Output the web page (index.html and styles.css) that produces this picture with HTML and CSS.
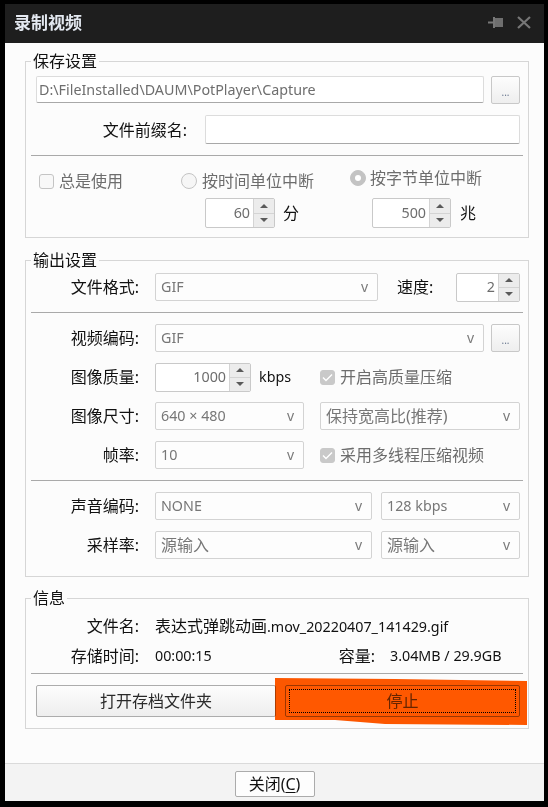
FILE: index.html
```html
<!DOCTYPE html>
<html lang="zh-CN">
<head>
<meta charset="utf-8">
<title>录制视频</title>
<link rel="stylesheet" href="styles.css">
</head>
<body>
<div class="window">
  <div class="titlebar">
    <span class="title">录制视频</span>
    <span class="tb-icons">
      <svg class="pin" width="15" height="11" viewBox="0 0 15 11"><path d="M0 5.5h6" stroke="#777" stroke-width="2"/><rect x="5" y="0" width="2" height="11" fill="#777"/><rect x="7" y="1" width="8" height="9" fill="#6e6e6e"/></svg>
      <svg class="xbtn" width="14" height="13" viewBox="0 0 14 13"><path d="M1 1l12 11M13 1L1 12" stroke="#777" stroke-width="2.2"/></svg>
    </span>
  </div>

  <div class="content">
    <fieldset class="group g-save">
      <legend>保存设置</legend>
      <div class="row r-path">
        <div class="input path lat">D:\FileInstalled\DAUM\PotPlayer\Capture</div>
        <div class="btn dots">...</div>
      </div>
      <div class="row r-prefix">
        <span class="lbl lbl-wide">文件前缀名:</span>
        <div class="input grow"></div>
      </div>
      <div class="sep s1"></div>
      <div class="opts r-radio">
        <span class="check c-always"><span class="box"></span>总是使用</span>
        <span class="check"><span class="radio"></span>按时间单位中断</span>
        <span class="check r2"><span class="radio on"></span>按字节单位中断</span>
      </div>
      <div class="opts r-spins">
        <span></span>
        <span class="spin-wrap sw1">
          <span class="spin w70"><span class="val lat">60</span><span class="arrows"><i class="up"></i><i class="dn"></i></span></span>
          <span class="unit">分</span>
        </span>
        <span class="spin-wrap sw2">
          <span class="spin w79"><span class="val lat">500</span><span class="arrows"><i class="up"></i><i class="dn"></i></span></span>
          <span class="unit u2">兆</span>
        </span>
      </div>
    </fieldset>

    <fieldset class="group g-out">
      <legend>输出设置</legend>
      <div class="stack">
        <div class="row h28">
          <span class="lbl">文件格式:</span>
          <span class="combo w223"><span class="lat">GIF</span><span class="v">v</span></span>
          <span class="speed">速度:</span>
          <span class="spin w64 push"><span class="val lat">2</span><span class="arrows"><i class="up"></i><i class="dn"></i></span></span>
        </div>
        <div class="sep"></div>
        <div class="row h28">
          <span class="lbl">视频编码:</span>
          <span class="combo grow"><span class="lat">GIF</span><span class="v">v</span></span>
          <div class="btn dots">...</div>
        </div>
        <div class="row h28">
          <span class="lbl">图像质量:</span>
          <span class="cell c149">
            <span class="spin w96"><span class="val lat">1000</span><span class="arrows"><i class="up"></i><i class="dn"></i></span></span>
            <span class="unit kbps lat">kbps</span>
          </span>
          <span class="check cell2"><span class="box on"><svg width="11" height="9" viewBox="0 0 11 9"><path d="M1 4.5l3 3 6-6" fill="none" stroke="#fff" stroke-width="1.4"/></svg></span>开启高质量压缩</span>
        </div>
        <div class="row h28">
          <span class="lbl">图像尺寸:</span>
          <span class="combo c149"><span class="lat">640 × 480</span><span class="v">v</span></span>
          <span class="combo cell2 grow"><span>保持宽高比(推荐)</span><span class="v">v</span></span>
        </div>
        <div class="row h28">
          <span class="lbl">帧率:</span>
          <span class="combo c149"><span class="lat">10</span><span class="v">v</span></span>
          <span class="check cell2"><span class="box on"><svg width="11" height="9" viewBox="0 0 11 9"><path d="M1 4.5l3 3 6-6" fill="none" stroke="#fff" stroke-width="1.4"/></svg></span>采用多线程压缩视频</span>
        </div>
        <div class="sep"></div>
        <div class="row h28">
          <span class="lbl">声音编码:</span>
          <span class="combo c217"><span class="lat">NONE</span><span class="v">v</span></span>
          <span class="combo cell3 grow"><span class="lat">128 kbps</span><span class="v">v</span></span>
        </div>
        <div class="row h28">
          <span class="lbl">采样率:</span>
          <span class="combo c217"><span>源输入</span><span class="v">v</span></span>
          <span class="combo cell3 grow"><span>源输入</span><span class="v">v</span></span>
        </div>
      </div>
    </fieldset>

    <fieldset class="group g-info">
      <legend>信息</legend>
      <div class="row h24">
        <span class="lbl">文件名:</span>
        <span class="value">表达式弹跳动画<span class="lat">.mov_20220407_141429.gif</span></span>
      </div>
      <div class="row h24 r-info2">
        <span class="lbl">存储时间:</span>
        <span class="value v178 lat">00:00:15</span>
        <span class="lbl2">容量:</span>
        <span class="value v2 lat">3.04MB / 29.9GB</span>
      </div>
      <div class="sep s3"></div>
      <div class="r-btns">
        <div class="btn big">打开存档文件夹</div>
        <div class="btn big stop"><span class="focus">停止</span></div>
        <svg class="marker" width="252" height="47" viewBox="0 0 252 47" preserveAspectRatio="none"><polygon points="0,0 120,1 252,3 252,47 110,46 60,42 0,42" fill="#ff5800"/></svg>
      </div>
    </fieldset>
  </div>

  <div class="footer">
    <div class="btn close-btn">关闭(<u>C</u>)</div>
  </div>
</div>
</body>
</html>
```

FILE: styles.css
```css
* { box-sizing: border-box; }
html, body { margin: 0; padding: 0; }
body {
  background: #000;
  width: 548px;
  height: 807px;
  overflow: hidden;
  font-family: "Noto Sans", "Noto Sans CJK SC", sans-serif;
  font-size: 16px;
  line-height: 20px;
  color: #111;
}
.lat { font-size: 14.3px; }
.window {
  margin: 4px 4px 0 5px;
  height: 797px;
  display: flex;
  flex-direction: column;
  background: #fcfcfc;
}
.titlebar {
  height: 39px;
  flex: none;
  background: #1e1e1e;
  display: flex;
  align-items: center;
  padding: 0 13px 0 9px;
}
.title {
  font-family: "Noto Sans CJK SC", sans-serif;
  font-weight: 700;
  font-size: 17px;
  color: #e3e8f0;
  margin-top: -4px;
}
.tb-icons {
  margin-left: auto;
  display: flex;
  align-items: center;
  gap: 14px;
  margin-top: -3px;
}
.tb-icons svg { display: block; }

.content {
  flex: 1;
  padding: 8px 15px 0 20px;
}
.group {
  margin: 0;
  min-width: 0;
  border: 1px solid #d6d6d6;
  padding: 5px 8px 9px 10px;
}
.group legend {
  padding: 0 2px;
  margin-left: -5px;
  line-height: 20px;
  color: #111;
}
.g-out { margin-top: 12px; padding-top: 3px; padding-bottom: 17px; }
.g-info { margin-top: 11px; padding-top: 6px; padding-bottom: 11px; }

.row { display: flex; align-items: center; }
.h28 { height: 28px; }
.h24 { height: 24px; }
.r-info2 { margin-top: 6px; }
.stack { display: flex; flex-direction: column; gap: 11px; }
.grow { flex: 1; min-width: 0; }

.r-path { height: 27px; }
.r-prefix { height: 29px; margin-top: 12px; }

.input {
  height: 100%;
  background: #fff;
  border: 1px solid #dcdcdc;
  border-bottom-color: #a8a8a8;
  border-radius: 2px;
  padding: 0 2px;
  display: flex;
  align-items: center;
  white-space: nowrap;
  overflow: hidden;
}
.path { flex: 1; color: #6e6e6e; }
.r-prefix .input { margin-left: 18px; }

.btn {
  display: flex;
  align-items: center;
  justify-content: center;
  background: linear-gradient(#fdfdfd, #eeeeee);
  border: 1px solid #b4b4b4;
  border-radius: 2px;
  color: #222;
  white-space: nowrap;
}
.dots {
  flex: none;
  width: 29px;
  height: 28px;
  margin-left: 7px;
  border-color: #c8c8c8;
  font-size: 10px;
  color: #6a7890;
  padding-top: 4px;
}

.lbl {
  flex: none;
  width: 103px;
  margin-right: 16px;
  text-align: right;
  white-space: nowrap;
  color: #111;
}
.lbl-wide { width: 151px; margin-right: 0; }

.sep {
  height: 0;
  border-top: 1px solid #a9a9a9;
  margin: 0 -3px 0 -5px;
}
.s1 { margin-top: 11px; }
.s3 { margin-top: 5px; }

.opts {
  display: grid;
  grid-template-columns: 145px 169px 1fr;
  align-items: center;
}
.r-radio { height: 20px; margin-top: 15px; }
.r-spins { height: 30px; margin-top: 7px; }

.check {
  display: inline-flex;
  align-items: center;
  gap: 5px;
  color: #6d6d6d;
  white-space: nowrap;
}
.c-always { margin-left: 3px; }
.r2 { margin-top: -7px; gap: 4px; }
.box {
  flex: none;
  width: 15px;
  height: 15px;
  border: 1px solid #c4c4c4;
  border-radius: 3px;
  background: #f8f8f8;
  display: flex;
  align-items: center;
  justify-content: center;
}
.box.on { background: #c9c9c9; border-color: #c9c9c9; }
.box svg { display: block; }
.radio {
  flex: none;
  width: 16px;
  height: 16px;
  border: 1px solid #c4c4c4;
  border-radius: 50%;
  background: #f6f6f6;
  display: flex;
  align-items: center;
  justify-content: center;
}
.radio.on { background: #c3c3c3; border-color: #c3c3c3; }
.radio.on::after {
  content: "";
  width: 6px;
  height: 6px;
  border-radius: 50%;
  background: #fff;
}

.spin-wrap { display: flex; align-items: center; }
.sw1 { margin-left: 24px; }
.sw2 { margin-left: 22px; }
.unit { margin-left: 8px; color: #111; }
.u2 { margin-left: 9px; }
.kbps { margin-left: 8px; }

.spin {
  flex: none;
  display: flex;
  height: 30px;
  background: #fff;
  border: 1px solid #c9c9c9;
  border-radius: 2px;
  color: #6d6d6d;
}
.w70 { width: 70px; }
.w79 { width: 79px; }
.w64 { width: 64px; height: 29px; }
.w96 { width: 96px; height: 29px; }
.spin .val {
  flex: 1;
  padding-right: 3px;
  display: flex;
  align-items: center;
  justify-content: flex-end;
}
.arrows {
  flex: none;
  width: 21px;
  display: flex;
  flex-direction: column;
  border-left: 1px solid #d4d4d4;
}
.arrows i {
  flex: 1;
  background: #ececec;
  display: flex;
  align-items: center;
  justify-content: center;
}
.arrows i.dn { border-top: 1px solid #d4d4d4; }
.arrows i.up::before {
  content: "";
  border-left: 4px solid transparent;
  border-right: 4px solid transparent;
  border-bottom: 4px solid #5a5a5a;
}
.arrows i.dn::before {
  content: "";
  border-left: 4px solid transparent;
  border-right: 4px solid transparent;
  border-top: 4px solid #5a5a5a;
}
.push { margin-left: auto; }

.combo {
  height: 28px;
  display: flex;
  align-items: center;
  background: #fdfdfd;
  border: 1px solid #d3d3d3;
  border-radius: 2px;
  padding: 0 9px 0 5px;
  color: #777;
  white-space: nowrap;
}
.combo .v { margin-left: auto; font-size: 14px; color: #7a7a7a; }
.w223 { width: 223px; flex: none; }
.c149 { width: 149px; flex: none; }
.c217 { width: 217px; flex: none; }
.cell { display: flex; align-items: center; }
.cell2 { margin-left: 16px; }
.cell3 { margin-left: 9px; }
.speed { margin-left: 19px; color: #111; white-space: nowrap; }

.value { color: #111; white-space: nowrap; }
.v178 { width: 178px; flex: none; }
.lbl2 { width: 42px; text-align: right; flex: none; }
.v2 { margin-left: 15px; }

.r-btns {
  position: relative;
  display: grid;
  grid-template-columns: 240px 1fr;
  column-gap: 9px;
  height: 32px;
  margin-top: 11px;
}
.big { height: 32px; border-color: #acacac; color: #2a2a2a; }
.stop { padding: 3px; background: #fff; border-color: #9a9a9a; }
.focus {
  flex: 1;
  align-self: stretch;
  display: flex;
  align-items: center;
  justify-content: center;
  border: 1px dotted #000;
  color: #666;
}
.marker {
  position: absolute;
  left: 239px;
  top: -7px;
  mix-blend-mode: multiply;
  pointer-events: none;
}

.footer {
  flex: none;
  height: 38px;
  border-top: 1px solid #dadada;
  background: #f3f3f3;
  display: flex;
  justify-content: center;
  padding-top: 7px;
}
.close-btn {
  width: 80px;
  height: 26px;
  border-color: #ababab;
  background: #fdfdfd;
  color: #111;
}
.close-btn u { text-decoration-thickness: 1px; text-underline-offset: 2px; }
```
